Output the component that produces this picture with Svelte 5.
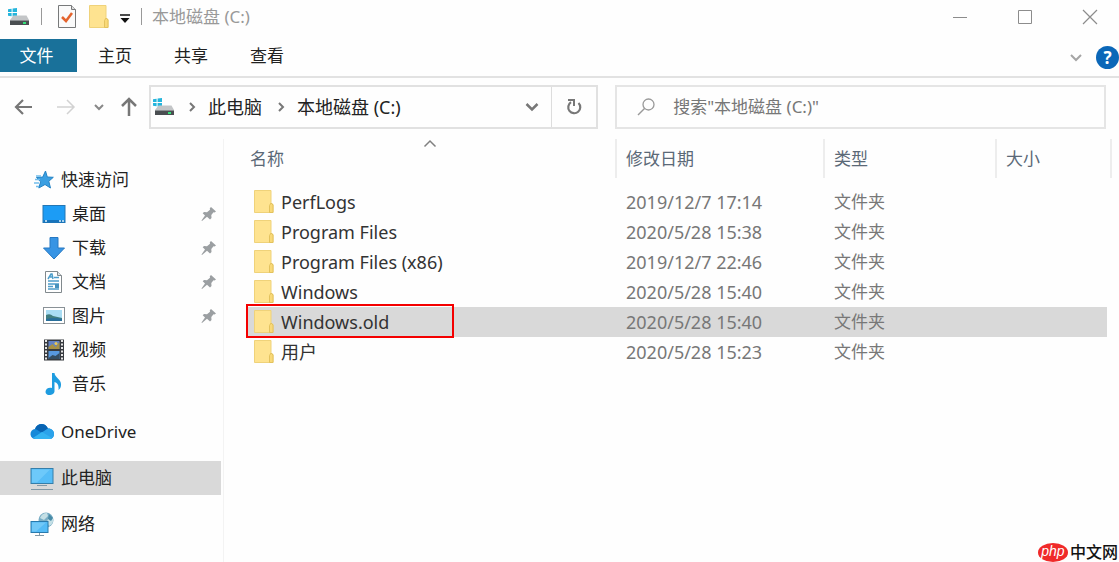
<script>
  const tabs = ['主页', '共享', '查看'];

  const quickItems = [
    { label: '桌面', icon: 'desktop', pinned: true },
    { label: '下载', icon: 'download', pinned: true },
    { label: '文档', icon: 'document', pinned: true },
    { label: '图片', icon: 'picture', pinned: true },
    { label: '视频', icon: 'video', pinned: false },
    { label: '音乐', icon: 'music', pinned: false }
  ];

  const places = [
    { label: 'OneDrive', icon: 'cloud' },
    { label: '此电脑', icon: 'computer' },
    { label: '网络', icon: 'network' }
  ];

  const files = [
    { name: 'PerfLogs', date: '2019/12/7 17:14' },
    { name: 'Program Files', date: '2020/5/28 15:38' },
    { name: 'Program Files (x86)', date: '2019/12/7 22:46' },
    { name: 'Windows', date: '2020/5/28 15:40' },
    { name: 'Windows.old', date: '2020/5/28 15:40' },
    { name: '用户', date: '2020/5/28 15:23' }
  ];

  let selected = $state('Windows.old');
  let place = $state('此电脑');
  let query = $state('');
</script>

{#snippet drive()}
  <svg width="24" height="20" viewBox="0 0 24 20" aria-hidden="true">
    <path d="M1 2.200 4.600 1.700V5H1zM5.600 1.500 10 1v4H5.600zM1 6h3.600v3.300L1 8.800zM5.600 6H10v4L5.600 9.400z" fill="#25b5dc" />
    <path d="M6.500 8.500h13L22 13H3z" fill="#c3c5c7" />
    <rect x="3" y="13" width="19" height="5" fill="#4a4e51" />
    <path d="M3 13h19v1H3z" fill="#8b8f92" />
    <rect x="16" y="15" width="3" height="2" fill="#35e07a" />
  </svg>
{/snippet}

{#snippet folder()}
  <svg width="20" height="24" viewBox="0 0 20 24" aria-hidden="true">
    <path d="M.500.500h16.500v12l2 2v8H.500z" fill="#fee390" stroke="#efd27a" />
    <path d="M15.500 22.500v-7l1.500-2.500 2 2v7.500z" fill="#f9d978" stroke="#e3c25e" />
  </svg>
{/snippet}

{#snippet pin()}
  <svg class="pin" width="16" height="16" viewBox="0 0 16 16" aria-hidden="true">
    <path d="M10 1l5 4.500-1.500 1-1-.2-2.200 2.800.2 3-1.500 1.400-3-2.700L1 15l-.5-.5L4 9.500 1.700 7.300 3 6l3 .2L9 3.700l-.2-1.500z" fill="#9b9fa2" />
  </svg>
{/snippet}

{#snippet icon(kind)}
  <svg width="24" height="24" viewBox="0 0 24 24" aria-hidden="true">
    {#if kind === 'star'}
      <path d="M14.500 3l1.800 6 6 .3-4.500 4 1.700 6.700-5.500-3.500L7.800 20l1.800-6.200L5.500 9.500l6.200-.4z" fill="#3a9fe2" stroke="#2483c5" />
      <path d="M5 8h5M4 11.500h5M3 15h5M5 18.500h3" stroke="#72bdeb" stroke-width="1.500" />
    {:else if kind === 'desktop'}
      <rect x="1" y="3.500" width="22" height="17" fill="#1c9cf5" stroke="#2376b4" />
      <path d="M1.500 18h21v2.500h-21z" fill="#1673bb" />
      <path d="M3 19h2M17 19h2M20 19h2" stroke="#d8f1ff" stroke-width="1.500" />
    {:else if kind === 'download'}
      <path d="M8 1.500h8V12h6.500L12 23 1.500 12H8z" fill="#3794e4" stroke="#2678c2" />
    {:else if kind === 'document'}
      <path d="M3.500 1.500h12l4 4v17h-16z" fill="#fff" stroke="#81898d" />
      <path d="M15.500 1.500v4h4" fill="#dce2e5" stroke="#81898d" />
      <path d="M6 9 9 4h1l1 5M8 7h3M12 7.500h5M6 11h11M6 14h11M6 16.500h5M6 19h11" fill="none" stroke="#4d9dca" stroke-width="1.500" />
      <rect x="13" y="14" width="4" height="4" fill="#4792bd" />
    {:else if kind === 'picture'}
      <rect x="1.500" y="3.500" width="21" height="16" fill="#fff" stroke="#899196" />
      <rect x="4" y="6" width="16" height="11" fill="#a9ddf4" />
      <path d="M4 11q4-2 7 1l9 2v3H4z" fill="#417e80" />
      <path d="M4 15q8-2 16 0v2H4z" fill="#286f9b" />
    {:else if kind === 'video'}
      <rect x="2" y="1.500" width="20" height="21" fill="#373a3f" />
      <path d="M4 2v20M20 2v20" stroke="#e6e6e6" stroke-width="2" stroke-dasharray="2 1.500" />
      <rect x="6.500" y="3" width="11" height="8" fill="#6382c5" />
      <rect x="6.500" y="13" width="11" height="8" fill="#5798df" />
      <path d="M6.500 9l4-3 3 3 4-5v7h-11z" fill="#a89145" />
      <path d="M6.500 20l4-3 3 1 4-3v6h-11z" fill="#344d62" />
      <circle cx="14" cy="5.500" r="1.500" fill="#eac955" />
    {:else if kind === 'music'}
      <path d="M10 1h2.500c.5 5 7 6 6.500 12 0 2-1 4-2.500 5 .5-5-1-7-4-8v9c0 5-9 5.500-9 1 0-3.500 3.500-5 6.500-4z" fill="#1e9ce0" />
    {:else if kind === 'cloud'}
      <path d="M6 19a5 5 0 01-1-10C7 3 15 2 18 8.500c4 0 6 2.500 6 5.500 0 3-2 5-5 5z" fill="#1689d9" />
      <path d="M5 9c2-6 10-7 13-.5L12 13 6.500 9.500z" fill="#0863b2" />
      <path d="M3 18 18 8.500c4 0 6 2.500 6 5.500 0 3-2 5-5 5H6z" fill="#2ba2ea" />
      <path d="M12 12l10 6c-1 1-2 1-3 1H6l-3-1z" fill="#34b3f2" />
    {:else if kind === 'computer'}
      <rect x="1" y="2.500" width="22" height="15" fill="#56bdf7" stroke="#347eaa" />
      <path d="M2 3.500h18L7 16.500H2z" fill="#7dd0fb" opacity=".6" />
      <path d="M7 19.500h10M1 23.500h22" stroke="#8198a6" />
    {:else}
      <circle cx="16" cy="8" r="7.500" fill="#79adc5" />
      <path d="M10 6q2-5 7-5l1 3-4 4zM18 7l5-1q1 6-4 8l-2-4z" fill="#c4dfe5" />
      <path d="M19 2l4 4-2 3-3-2z" fill="#488ba7" />
      <rect x="1" y="9.500" width="17" height="11" fill="#54bbf6" stroke="#287aad" />
      <path d="M2 10.500h14l-10 9H2z" fill="#86d1f8" opacity=".6" />
      <path d="M9.500 21v2M5 23.500h9" stroke="#8198a6" />
    {/if}
  </svg>
{/snippet}

{#snippet crumbArrow()}
  <svg class="crumb-arrow" width="8" height="12" viewBox="0 0 8 12" aria-hidden="true">
    <path d="M2 2l4 4-4 4" fill="none" stroke="#777" stroke-width="2" />
  </svg>
{/snippet}

<div class="window">
  <header class="titlebar">
    <span class="app-icon">{@render drive()}</span>
    <span class="rule"></span>
    <button class="quick check" aria-label="属性">
      <svg width="18" height="23" viewBox="0 0 18 23">
        <path d="M.5.500h13l4 4v18H.5z" fill="#fafafa" stroke="#77797a" />
        <path d="M13.500.500v4h4" fill="#ddd" stroke="#77797a" />
        <path d="M4 12l4 4 6-8" fill="none" stroke="#e4632d" stroke-width="2.500" />
      </svg>
    </button>
    <button class="quick" aria-label="新建文件夹">{@render folder()}</button>
    <button class="quick more" aria-label="自定义快速访问工具栏">
      <svg width="12" height="10" viewBox="0 0 12 10"><path d="M1 1h10" stroke="#111" stroke-width="1.500" /><path d="M1.500 4h9L6 9z" fill="#111" /></svg>
    </button>
    <span class="rule"></span>
    <h1>本地磁盘 (C:)</h1>
    <div class="controls">
      <button aria-label="最小化"><svg width="16" height="16" viewBox="0 0 16 16"><path d="M1 8.500h14" stroke="#8c8c8c" /></svg></button>
      <button aria-label="最大化"><svg width="16" height="16" viewBox="0 0 16 16"><path d="M1.500 1.500h13v13h-13z" fill="none" stroke="#8c8c8c" /></svg></button>
      <button aria-label="关闭"><svg width="16" height="16" viewBox="0 0 16 16"><path d="M1 1l14 14M15 1L1 15" stroke="#8c8c8c" stroke-width="1.200" /></svg></button>
    </div>
  </header>

  <nav class="ribbon" aria-label="功能区">
    <button class="file-tab">文件</button>
    {#each tabs as tab}
      <button class="tab">{tab}</button>
    {/each}
    <div class="ribbon-end">
      <button aria-label="展开功能区"><svg width="14" height="10" viewBox="0 0 14 10"><path d="M2 2l5 5 5-5" fill="none" stroke="#a5a5a5" stroke-width="2" /></svg></button>
      <button class="help" aria-label="帮助">?</button>
    </div>
  </nav>

  <div class="toolbar">
    <div class="history">
      <button aria-label="后退"><svg width="20" height="18" viewBox="0 0 20 18"><path d="M18 9H2M9 2L2 9l7 7" fill="none" stroke="#777" stroke-width="2.200" /></svg></button>
      <button aria-label="前进"><svg width="20" height="18" viewBox="0 0 20 18"><path d="M1 9h16M11 2l7 7-7 7" fill="none" stroke="#d2d2d2" stroke-width="1.500" /></svg></button>
      <button aria-label="最近浏览的位置"><svg width="10" height="8" viewBox="0 0 10 8"><path d="M1 2l4 4 4-4" fill="none" stroke="#888" stroke-width="2" /></svg></button>
      <button aria-label="上移"><svg width="18" height="20" viewBox="0 0 18 20"><path d="M9 19V2M2 9l7-7 7 7" fill="none" stroke="#777" stroke-width="2.500" /></svg></button>
    </div>
    <div class="address">
      <div class="path">
        {@render drive()}
        {@render crumbArrow()}
        <a href="#pc">此电脑</a>
        {@render crumbArrow()}
        <a href="#c">本地磁盘 (C:)</a>
        <button class="expand" aria-label="以前的位置"><svg width="14" height="10" viewBox="0 0 14 10"><path d="M1.500 2L7 7.500 12.500 2" fill="none" stroke="#777" stroke-width="2.500" /></svg></button>
      </div>
      <button class="refresh" aria-label="刷新">
        <svg width="16" height="18" viewBox="0 0 16 18"><path d="M12.500 5A6 6 0 1 1 5 4.200" fill="none" stroke="#777" stroke-width="2.200" /><path d="M2 2h6v6" fill="none" stroke="#777" stroke-width="2" /></svg>
      </button>
    </div>
    <label class="search">
      <svg width="18" height="18" viewBox="0 0 18 18" aria-hidden="true"><circle cx="11.500" cy="6.500" r="5.500" fill="none" stroke="#999" stroke-width="1.300" /><path d="M7.500 10.500L1 17" stroke="#999" stroke-width="1.500" /></svg>
      <input type="text" bind:value={query} aria-label="搜索" placeholder={'搜索"本地磁盘 (C:)"'} />
    </label>
  </div>

  <div class="body">
    <nav class="sidebar" aria-label="导航窗格">
      <button class="node quick-access">{@render icon('star')}<span>快速访问</span></button>
      {#each quickItems as item}
        <button class="node child">
          {@render icon(item.icon)}
          <span>{item.label}</span>
          {#if item.pinned}{@render pin()}{/if}
        </button>
      {/each}
      <div class="places">
        {#each places as item}
          <button class="node" class:active={place === item.label} onclick={() => (place = item.label)}>
            {@render icon(item.icon)}<span>{item.label}</span>
          </button>
        {/each}
      </div>
    </nav>

    <main>
      <table>
        <colgroup><col /><col class="date-col" /><col class="type-col" /><col class="size-col" /></colgroup>
        <thead>
          <tr>
            <th>
              <button>名称</button>
              <svg class="sort" width="14" height="9" viewBox="0 0 14 9" aria-hidden="true"><path d="M1.500 7.500L7 2l5.500 5.500" fill="none" stroke="#808080" stroke-width="1.500" /></svg>
            </th>
            <th><button>修改日期</button></th>
            <th><button>类型</button></th>
            <th><button>大小</button></th>
          </tr>
        </thead>
        <tbody>
          {#each files as file}
            <tr class:selected={selected === file.name} onclick={() => (selected = file.name)}>
              <td class="name">
                <div class="entry">{@render folder()}<span>{file.name}</span></div>
                {#if file.name === 'Windows.old'}<span class="marker"></span>{/if}
              </td>
              <td class="date">{file.date}</td>
              <td>文件夹</td>
              <td></td>
            </tr>
          {/each}
        </tbody>
      </table>
    </main>
  </div>

  <div class="watermark"><span class="badge">php</span><span>中文网</span></div>
</div>

<style>
  :global(body) {
    margin: 0;
    background: #fff;
  }
  .window {
    position: relative;
    box-sizing: border-box;
    min-height: 100vh;
    display: flex;
    flex-direction: column;
    overflow: hidden;
    background: #fefefe;
    color: #222;
    font: 17px/24px 'Noto Sans', 'Noto Sans CJK SC', sans-serif;
  }
  button, input {
    margin: 0;
    padding: 0;
    border: 0;
    background: none;
    color: inherit;
    font: inherit;
  }
  svg {
    display: block;
    flex: none;
  }
  a {
    color: inherit;
    text-decoration: none;
  }
  .titlebar {
    display: flex;
    align-items: center;
    height: 33px;
    margin-bottom: 6px;
    padding-left: 7px;
  }
  .rule {
    width: 1px;
    height: 17px;
    margin: 0 10px;
    background: #999;
  }
  .check {
    margin: 0 13px 0 6px;
  }
  .more {
    margin: 4px 0 0 10px;
  }
  h1 {
    margin: 0;
    color: #999;
    font-size: 17px;
    font-weight: 400;
  }
  .controls {
    display: flex;
    gap: 49px;
    margin-left: auto;
    padding-right: 21px;
  }
  .ribbon {
    display: flex;
    height: 37px;
    border-bottom: 2px solid #e2e2e2;
  }
  .file-tab, .tab {
    height: 33px;
    width: 76px;
  }
  .file-tab {
    width: 77px;
    background: #19719a;
    color: #fff;
    padding-right: 4px;
  }
  .ribbon-end {
    display: flex;
    align-items: center;
    gap: 13px;
    margin-left: auto;
  }
  .help {
    width: 23px;
    height: 23px;
    border-radius: 50%;
    background: #0b67b8;
    color: #fff;
    font-size: 17px;
    font-weight: 700;
    line-height: 22px;
  }
  .toolbar {
    display: flex;
    padding: 7px 13px 0 14px;
  }
  .history {
    display: flex;
    align-items: center;
    gap: 18px;
    width: 135px;
  }
  .history button:nth-child(1) {
    margin-right: 4px;
  }
  .history button:nth-child(4) {
    margin-left: -2px;
  }
  .address {
    display: flex;
    flex: 449 1 0;
    box-sizing: border-box;
    height: 44px;
    margin-right: 17px;
    border: 2px solid #e1e1e1;
    min-width: 0;
  }
  .path {
    display: flex;
    align-items: center;
    flex: 1;
    padding: 0 12px 0 1px;
    white-space: nowrap;
    color: #222;
  }
  .path a {
    margin-right: 3px;
    font-size: 18px;
  }
  .crumb-arrow {
    margin: 0 12px;
  }
  .expand {
    margin-left: auto;
  }
  .refresh {
    display: grid;
    place-items: center;
    width: 45px;
    border-left: 1px solid #ddd;
  }
  .search {
    display: flex;
    align-items: center;
    flex: 491 1 0;
    box-sizing: border-box;
    height: 44px;
    gap: 18px;
    border: 2px solid #e5e5e5;
    min-width: 0;
  }
  .search svg {
    margin-left: 20px;
  }
  .search input {
    flex: 1;
    min-width: 0;
    outline: none;
  }
  .search input::placeholder {
    color: #777;
    opacity: 1;
  }
  .body {
    display: flex;
    flex: 1;
    padding-top: 10px;
  }
  .sidebar {
    display: flex;
    flex-direction: column;
    flex: none;
    box-sizing: border-box;
    width: 224px;
    padding: 24px 2px 0 0;
    border-right: 1px solid #f3f3f3;
  }
  .node {
    display: flex;
    align-items: center;
    gap: 7px;
    width: 100%;
    height: 34px;
    padding-left: 30px;
    text-align: left;
  }
  .child {
    padding-left: 42px;
  }
  .child, .quick-access {
    gap: 6px;
  }
  .quick-access {
    padding-left: 31px;
  }
  .pin {
    margin-left: auto;
    margin-right: 4px;
  }
  .places {
    display: grid;
    gap: 12px;
    margin-top: 14px;
  }
  .active {
    background: #d9d9d9;
  }
  main {
    flex: 1;
    min-width: 0;
    padding: 0 7px 0 23px;
  }
  table {
    width: 100%;
    table-layout: fixed;
    border-collapse: separate;
    border-spacing: 0;
  }
  .date-col { width: 208px; }
  .type-col { width: 172px; }
  .size-col { width: 115px; }
  th {
    position: relative;
    padding: 0 0 9px;
    color: #5b6977;
    font-weight: 400;
  }
  th button {
    display: block;
    box-sizing: border-box;
    width: 100%;
    height: 39px;
    padding-left: 9px;
    border-right: 2px solid #ededed;
    text-align: left;
  }
  th:first-child button {
    padding-left: 3px;
  }
  .sort {
    position: absolute;
    top: 0;
    left: calc(50% - 9px);
  }
  td {
    position: relative;
    height: 30px;
    padding: 0 0 0 9px;
    color: #777;
  }
  .name, .date {
    font-size: 18px;
  }
  .name {
    padding-left: 7px;
    color: #333;
  }
  .entry {
    display: flex;
    align-items: center;
    gap: 7px;
  }
  td:last-child {
    border-right: 5px solid transparent;
    background-clip: padding-box;
  }
  .selected td {
    background-color: #d9d9d9;
  }
  .marker {
    position: absolute;
    box-sizing: border-box;
    top: -3px;
    left: -1px;
    width: 208px;
    height: 34px;
    border: 2px solid #f40000;
  }
  .watermark {
    position: absolute;
    right: 1px;
    bottom: 0;
    display: flex;
    align-items: center;
    gap: 2px;
    font-size: 16px;
    line-height: 20px;
    font-weight: 500;
    color: #111;
  }
  .badge {
    width: 30px;
    height: 19px;
    border-radius: 50%;
    background: #f02a2a;
    color: #fff;
    font: italic 14px/16px 'Liberation Sans', sans-serif;
    text-align: center;
  }
</style>
